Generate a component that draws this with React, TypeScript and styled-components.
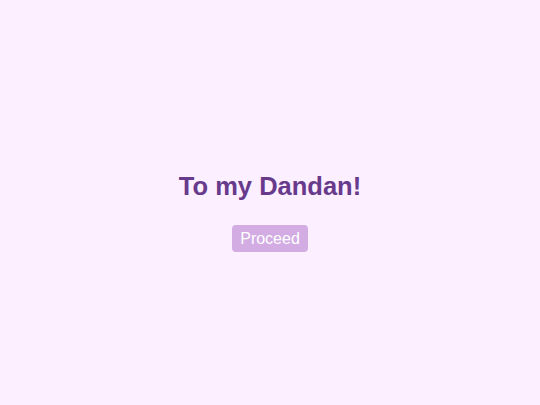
import styled, { createGlobalStyle } from 'styled-components';

const GlobalStyle = createGlobalStyle`
  html, body {
    margin: 0;
    padding: 0;
    height: 100%;
  }
  body {
    background: #fcefff;
    font-family: "Liberation Sans", Arial, sans-serif;
  }
  #root {
    height: 100%;
  }
`;

const Page = styled.main`
  height: 100vh;
  display: flex;
  flex-direction: column;
  align-items: center;
  justify-content: center;
  gap: 24px;
  padding-top: 18px;
  box-sizing: border-box;
`;

const Title = styled.h1`
  margin: 0;
  font-size: 25.5px;
  line-height: 30px;
  font-weight: 700;
  color: #673a8c;
`;

const ProceedButton = styled.button`
  font-family: inherit;
  font-size: 16px;
  line-height: 19px;
  color: #ffffff;
  background: #d3ace4;
  border: none;
  border-radius: 4px;
  padding: 4px 8px;
  cursor: pointer;
`;

export default function App() {
  return (
    <>
      <GlobalStyle />
      <Page>
        <Title>To my Dandan!</Title>
        <ProceedButton>Proceed</ProceedButton>
      </Page>
    </>
  );
}
